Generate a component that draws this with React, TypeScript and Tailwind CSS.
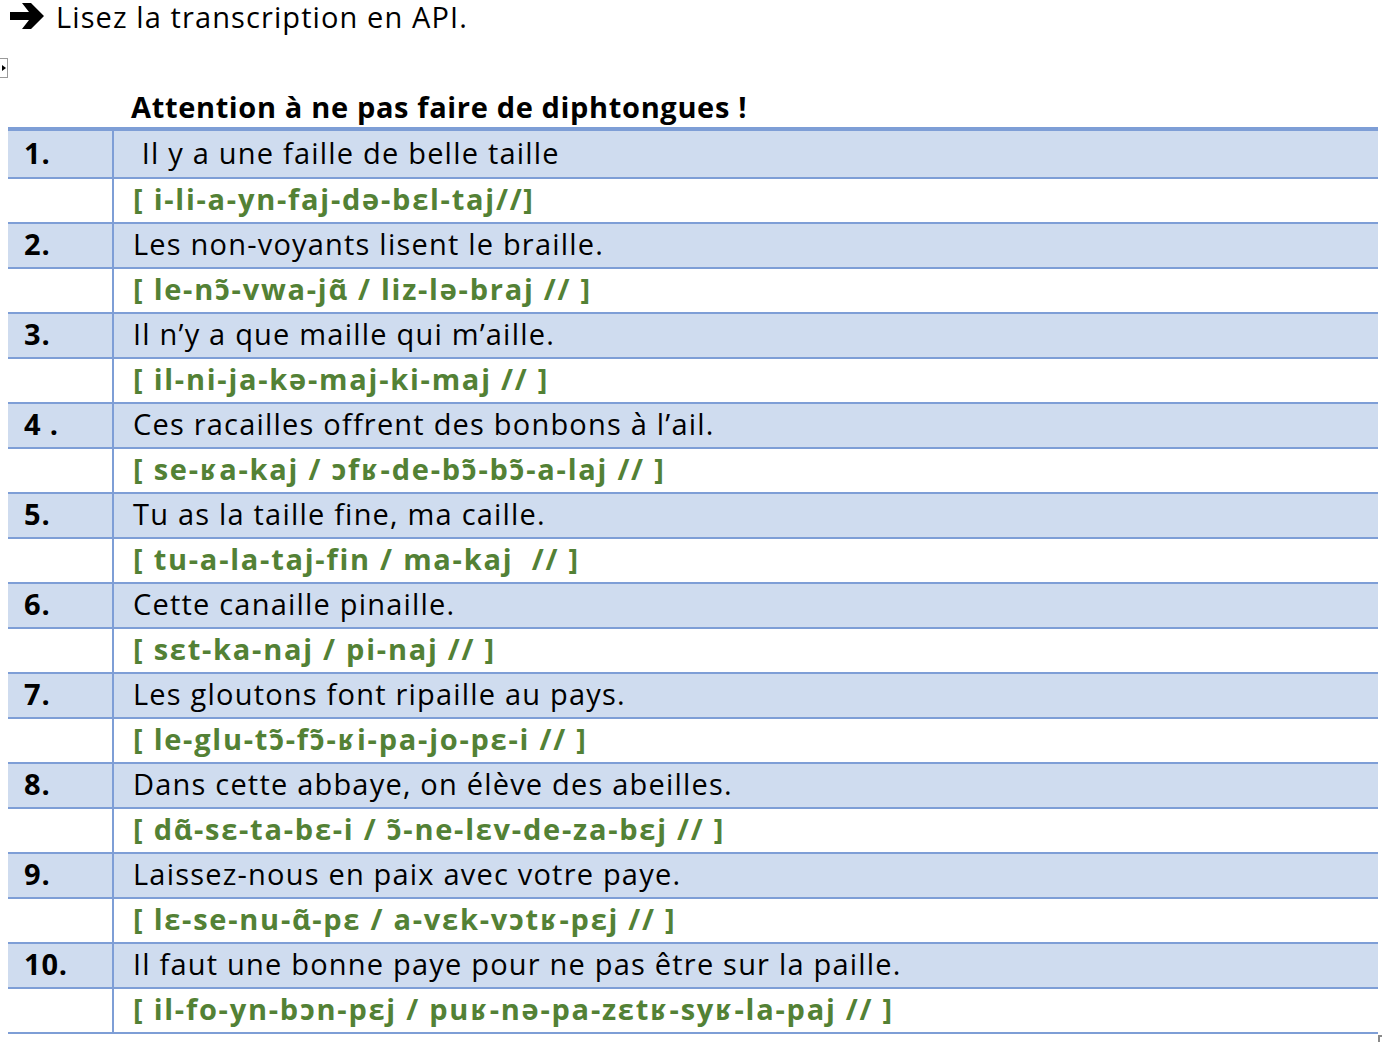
import React from "react";

type Item = {
  num: string;
  sentence: string;
  ipa: string;
};

const items: Item[] = [
  { num: "1.", sentence: " Il y a une faille de belle taille", ipa: "[ i-li-a-yn-faj-də-bɛl-taj//]" },
  { num: "2.", sentence: "Les non-voyants lisent le braille.", ipa: "[ le-nɔ̃-vwa-jɑ̃ / liz-lə-braj // ]" },
  { num: "3.", sentence: "Il n’y a que maille qui m’aille.", ipa: "[ il-ni-ja-kə-maj-ki-maj // ]" },
  { num: "4 .", sentence: "Ces racailles offrent des bonbons à l’ail.", ipa: "[ se-ʁa-kaj / ɔfʁ-de-bɔ̃-bɔ̃-a-laj // ]" },
  { num: "5.", sentence: "Tu as la taille fine, ma caille.", ipa: "[ tu-a-la-taj-fin / ma-kaj  // ]" },
  { num: "6.", sentence: "Cette canaille pinaille.", ipa: "[ sɛt-ka-naj / pi-naj // ]" },
  { num: "7.", sentence: "Les gloutons font ripaille au pays.", ipa: "[ le-glu-tɔ̃-fɔ̃-ʁi-pa-jo-pɛ-i // ]" },
  { num: "8.", sentence: "Dans cette abbaye, on élève des abeilles.", ipa: "[ dɑ̃-sɛ-ta-bɛ-i / ɔ̃-ne-lɛv-de-za-bɛj // ]" },
  { num: "9.", sentence: "Laissez-nous en paix avec votre paye.", ipa: "[ lɛ-se-nu-ɑ̃-pɛ / a-vɛk-vɔtʁ-pɛj // ]" },
  { num: "10.", sentence: "Il faut une bonne paye pour ne pas être sur la paille.", ipa: "[ il-fo-yn-bɔn-pɛj / puʁ-nə-pa-zɛtʁ-syʁ-la-paj // ]" },
];

const ArrowIcon = () => (
  <svg width="34" height="28" viewBox="0 0 34 28" fill="black">
    <polygon points="0,10 19,10 12,1 21,1 34,14 21,27 12,27 19,18 0,18" />
  </svg>
);

const App = () => {
  return (
    <div className="relative w-[1382px] h-[1042px] overflow-hidden bg-white text-black font-['Open_Sans','Noto_Sans',sans-serif]">
      {/* table move handle, cut by the left edge */}
      <div className="absolute left-0 top-[58px] w-[8px] h-[20px] border border-l-0 border-[#9a9a9a] flex items-center justify-end">
        <div className="w-0 h-0 border-y-[3px] border-y-transparent border-l-[4px] border-l-black mr-[1px]" />
      </div>

      <div className="flex items-center h-[32px] pl-[10px] gap-[12px]">
        <ArrowIcon />
        <p className="text-[29px] leading-none whitespace-nowrap tracking-[1.1px]">Lisez la transcription en API.</p>
      </div>

      <div className="mt-[55px] pl-[131px] h-[38px] flex items-center">
        <p className="text-[29px] font-bold leading-none whitespace-nowrap tracking-[0.65px]">
          Attention à ne pas faire de diphtongues !
        </p>
      </div>

      <div className="mt-[2px] ml-[8px] w-[1370px] border-t-4 border-[#7e9ed6]">
        {items.map((item, index) => (
          <React.Fragment key={index}>
            <div
              className={`flex bg-[#cfdcef] border-b-2 border-[#7e9ed6] ${
                index === 0 ? "h-[48px]" : "h-[45px]"
              }`}
            >
              <div className="w-[106px] shrink-0 border-r-2 border-[#7e9ed6] pl-[16px] pb-[4px] flex items-center">
                <span className="text-[29px] font-bold leading-none whitespace-pre tracking-[0.8px]">{item.num}</span>
              </div>
              <div className="pl-[19px] pb-[4px] flex items-center">
                <span className="text-[29px] leading-none whitespace-pre tracking-[1.2px]">{item.sentence}</span>
              </div>
            </div>
            <div className="flex h-[45px] bg-white border-b-2 border-[#7e9ed6]">
              <div className="w-[106px] shrink-0 border-r-2 border-[#7e9ed6]" />
              <div className="pl-[19px] pb-[4px] flex items-center">
                <span className="text-[29px] font-bold leading-none whitespace-pre text-[#538135] tracking-[1.75px]">
                  {item.ipa}
                </span>
              </div>
            </div>
          </React.Fragment>
        ))}
      </div>

      {/* resize handle in the bottom corner */}
      <div className="absolute left-[1378px] top-[1035px] w-[6px] h-[8px] border-l-2 border-t-2 border-[#8a8a8a]" />
    </div>
  );
};

export default App;
